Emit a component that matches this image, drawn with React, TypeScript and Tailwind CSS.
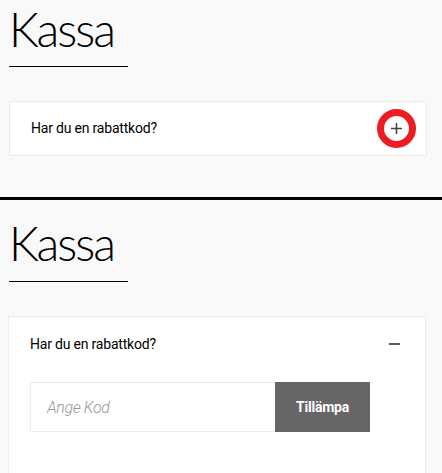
import React from 'react'

const body = { fontFamily: 'Roboto, "Liberation Sans", sans-serif' }
const heading = { fontFamily: 'Lato, "Open Sans", sans-serif' }

function Title({ gap }: { gap: string }) {
	return (
		<div className="pl-[9px]">
			<h1 className="text-[47px] leading-[48px] font-light tracking-[-2px] text-black" style={heading}>
				Kassa
			</h1>
			<div className={`${gap} h-px w-[119px] bg-black`} />
		</div>
	)
}

export default function App() {
	return (
		<div className="w-[442px] h-[473px] overflow-hidden bg-[#f9f9f9]" style={body}>
			{/* collapsed state */}
			<section className="h-[197px] pt-[5px]">
				<Title gap="mt-[13px]" />
				<div className="ml-[9px] mr-[15px] mt-[34px] h-[55px] border border-[#ececec] bg-white flex items-center justify-between pl-[21px] pr-[10px]">
					<span className="text-[14px] tracking-[-0.2px] text-black">Har du en rabattkod?</span>
					<span className="shrink-0 w-[39px] h-[39px] rounded-full border-[7px] border-[#ed1c24] flex items-center justify-center">
						<svg width="11" height="11" viewBox="0 0 11 11" className="text-[#444]">
							<path d="M5.5 0v11M0 5.5h11" stroke="currentColor" strokeWidth="1.5" />
						</svg>
					</span>
				</div>
			</section>

			<div className="h-[3px] bg-black" />

			{/* expanded state */}
			<section className="pt-[19px]">
				<Title gap="mt-[14px]" />
				<div className="ml-[8px] mr-[16px] mt-[34px] h-[200px] border border-[#ececec] border-b-0 bg-white pl-[21px] pr-[25px]">
					<div className="flex items-center justify-between h-[54px]">
						<span className="text-[14px] tracking-[-0.2px] text-black">Har du en rabattkod?</span>
						<svg width="11" height="2" viewBox="0 0 11 2" className="text-black">
							<path d="M0 1h11" stroke="currentColor" strokeWidth="1.3" />
						</svg>
					</div>
					<div className="mt-[11px] flex">
						<input
							placeholder="Ange Kod"
							className="w-[245px] h-[50px] border border-[#ececec] border-r-0 bg-white pl-[16px] text-[16px] tracking-[-0.4px] italic font-light placeholder:text-[#999] outline-none"
							style={body}
						/>
						<button className="w-[95px] h-[50px] bg-[#666666] text-white text-[14px] tracking-[-0.2px] font-bold" style={body}>
							Tillämpa
						</button>
					</div>
				</div>
			</section>
		</div>
	)
}
